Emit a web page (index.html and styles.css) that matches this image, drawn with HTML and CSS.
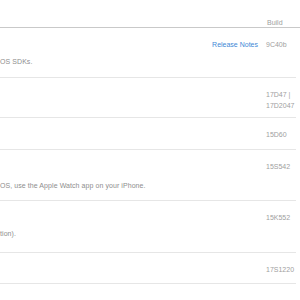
FILE: index.html
```html
<!DOCTYPE html>
<html lang="en">
<head>
<meta charset="utf-8">
<title>Releases</title>
<link rel="stylesheet" href="styles.css">
</head>
<body>
<div class="table">
  <div class="head">
    <div class="col-main"></div>
    <div class="col-notes"></div>
    <div class="col-build head-build">Build</div>
  </div>
  <div class="row r1">
    <div class="col-main"><div class="title"></div><div class="desc">OS SDKs.</div></div>
    <div class="col-notes"><a class="link" href="#">Release Notes</a></div>
    <div class="col-build">9C40b</div>
  </div>
  <div class="row r2">
    <div class="col-main"></div>
    <div class="col-notes"></div>
    <div class="col-build">17D47 | 17D2047</div>
  </div>
  <div class="row r3">
    <div class="col-main"></div>
    <div class="col-notes"></div>
    <div class="col-build">15D60</div>
  </div>
  <div class="row r4">
    <div class="col-main"><div class="title"></div><div class="desc">OS, use the Apple Watch app on your iPhone.</div></div>
    <div class="col-notes"></div>
    <div class="col-build">15S542</div>
  </div>
  <div class="row r5">
    <div class="col-main"><div class="title"></div><div class="desc">tion).</div></div>
    <div class="col-notes"></div>
    <div class="col-build">15K552</div>
  </div>
  <div class="row r6">
    <div class="col-main"></div>
    <div class="col-notes"></div>
    <div class="col-build">17S1220</div>
  </div>
</div>
</body>
</html>
```

FILE: styles.css
```css
html, body {
  margin: 0;
  padding: 0;
  background: #ffffff;
}
body {
  font-family: "Liberation Sans", Arial, sans-serif;
  font-size: 7px;
  line-height: 11px;
  color: #8e8e8e;
}
.table {
  width: 300px;
}
.head, .row {
  display: grid;
  grid-template-columns: 1fr auto 30px;
  column-gap: 8px;
  box-sizing: border-box;
}
.head {
  height: 28px;
  padding-top: 16.5px;
  padding-right: 4px;
  border-bottom: 1px solid #c9c9c9;
}
.head-build {
  padding-left: 1px;
  color: #a0a0a0;
}
.row {
  margin-right: 4px;
  padding-top: 10.5px;
  border-bottom: 1px solid #e6e6e6;
}
.r1 { height: 50px; }
.r2 { height: 40px; }
.r3 { height: 32px; }
.r4 { height: 51px; }
.r5 { height: 52px; }
.r6 { height: 31px; }
.title {
  height: 11px;
}
.desc {
  margin-top: 6px;
  white-space: nowrap;
  letter-spacing: 0.07px;
}
.r4 .desc { margin-top: 8px; }
.r5 .desc { margin-top: 5px; }
.col-build {
  color: #a0a0a0;
}
.link {
  color: #4288d6;
  text-decoration: none;
}
```
